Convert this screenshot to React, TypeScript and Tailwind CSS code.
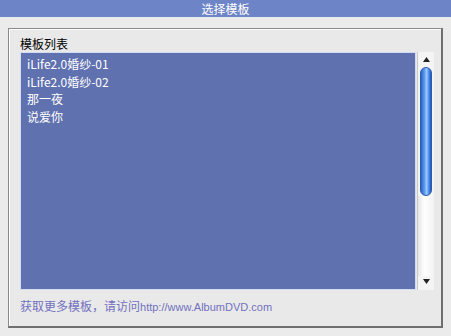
const items = ["iLife2.0婚纱-01", "iLife2.0婚纱-02", "那一夜", "说爱你"];

const cjk = "font-['SimSun','Noto_Sans_CJK_SC',sans-serif]";

export default function App() {
  return (
    <div className={`w-[451px] h-[336px] bg-[#ebebeb] overflow-hidden ${cjk}`}>
      <div className="h-[17px] bg-[#6d84c6] text-white text-[12px] leading-[17px] text-center">
        选择模板
      </div>

      <div className="mt-[11px] ml-[8px] w-[435px] h-[300px] bg-[#e9e9e9] border border-[#8a8a8a] border-r-2 border-b-2 border-r-[#6f6f6f] border-b-[#6f6f6f] pl-[11px] pt-[7px] shadow-[inset_1px_1px_0_#ffffff]">
        <div className="h-[16px] text-[12px] leading-[16px] text-black">模板列表</div>

        <div className="flex h-[238px]">
          <div className="w-[396px] h-full bg-[#5f71af] border border-[#d4dbf2] pl-[6px] pt-[2px]">
            {items.map((it) => (
              <div key={it} className="text-white text-[12px] leading-[17.5px] whitespace-nowrap">
                {it}
              </div>
            ))}
          </div>

          <div className="w-[17px] h-full ml-px flex flex-col bg-[#f4f4f4] border-l border-[#c9c9c9]">
            <div className="h-[15px] flex items-center justify-center">
              <svg width="7" height="5" viewBox="0 0 7 5">
                <path d="M3.5 0L7 5H0z" fill="#222" />
              </svg>
            </div>
            <div className="mx-auto w-[12px] h-[129px] rounded-t-[6px] rounded-b-[6px] bg-[linear-gradient(90deg,#2c64c8_0%,#5b9cf0_35%,#9cc8ff_55%,#4a8ae8_80%,#1f55b8_100%)] border border-[#2a5bb0]" />
            <div className="flex-1 bg-[linear-gradient(90deg,#e6e6e6,#ffffff_40%,#f2f2f2)]" />
            <div className="h-[14px] flex items-start justify-center pt-[3px]">
              <svg width="7" height="5" viewBox="0 0 7 5">
                <path d="M0 0H7L3.5 5z" fill="#222" />
              </svg>
            </div>
          </div>
        </div>

        <div className="mt-[6px] h-[16px] leading-[16px] text-[#7171c0] whitespace-nowrap">
          <span className="text-[12px]">获取更多模板，请访问</span>
          <span className="text-[11px] font-['Liberation_Sans',Arial,sans-serif]">http://www.AlbumDVD.com</span>
        </div>
      </div>
    </div>
  );
}
